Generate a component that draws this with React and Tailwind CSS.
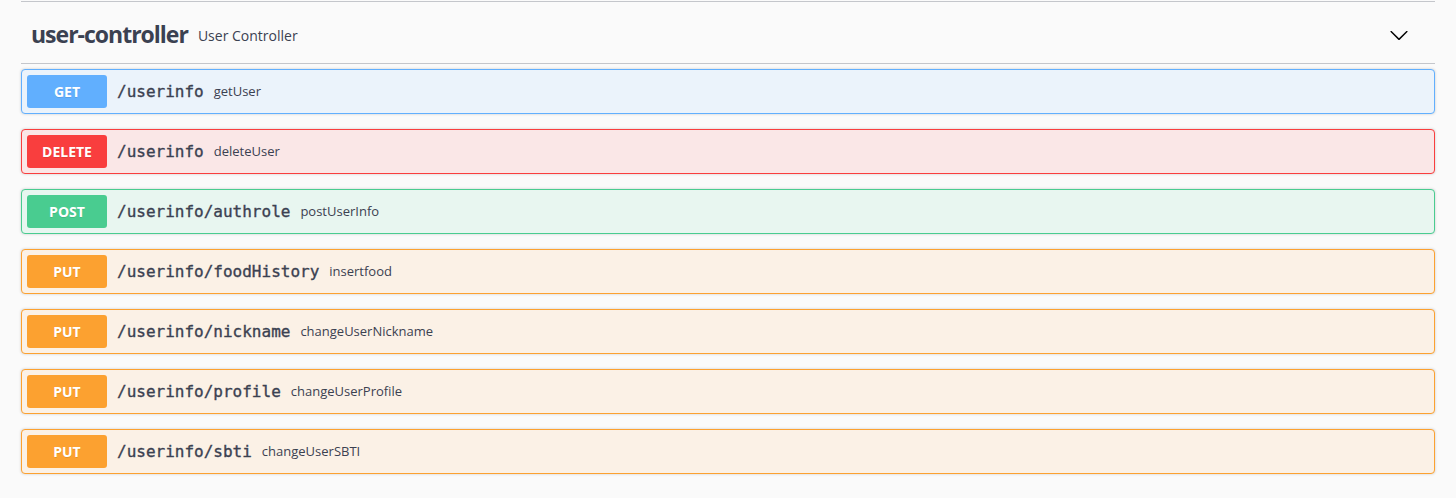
import * as React from "react";
import classNames from "clsx";

const ops = [
  { method: "GET", path: "/userinfo", summary: "getUser" },
  { method: "DELETE", path: "/userinfo", summary: "deleteUser" },
  { method: "POST", path: "/userinfo/authrole", summary: "postUserInfo" },
  { method: "PUT", path: "/userinfo/foodHistory", summary: "insertfood" },
  { method: "PUT", path: "/userinfo/nickname", summary: "changeUserNickname" },
  { method: "PUT", path: "/userinfo/profile", summary: "changeUserProfile" },
  { method: "PUT", path: "/userinfo/sbti", summary: "changeUserSBTI" }
];

const methodStyles = {
  GET: { block: "border-[#61affe] bg-[#ebf3fb]", badge: "bg-[#61affe]" },
  DELETE: { block: "border-[#f93e3e] bg-[#fae7e7]", badge: "bg-[#f93e3e]" },
  POST: { block: "border-[#49cc90] bg-[#e8f6f0]", badge: "bg-[#49cc90]" },
  PUT: { block: "border-[#fca130] bg-[#fbf1e6]", badge: "bg-[#fca130]" }
};

const sans = "font-['Open_Sans',sans-serif]";

function ArrowDown() {
  return (
    <svg width="20" height="20" viewBox="0 0 20 20" className="text-black">
      <path
        fill="currentColor"
        d="M17.418 6.109c.272-.268.709-.268.979 0s.271.701 0 .969l-7.908 7.83c-.27.268-.707.268-.979 0l-7.908-7.83c-.27-.268-.27-.701 0-.969.271-.268.709-.268.979 0L10 13.25l7.418-7.141z"
      />
    </svg>
  );
}

function OpBlock({ method, path, summary }) {
  const s = methodStyles[method];
  return (
    <div
      className={classNames(
        "mb-[15px] flex items-center rounded border p-[5px] shadow-[0_0_3px_rgba(0,0,0,0.19)]",
        s.block
      )}
    >
      <span
        className={classNames(
          "flex h-[33px] w-20 items-center justify-center rounded-[3px] text-sm font-bold text-white [text-shadow:0_1px_0_rgba(0,0,0,0.1)]",
          sans,
          s.badge
        )}
      >
        {method}
      </span>
      <span className="px-[10px] font-['DejaVu_Sans_Mono',monospace] text-base text-[#3b4151] [-webkit-text-stroke:0.35px_#3b4151]">
        {path}
      </span>
      <span className={classNames("pt-px text-[13px] text-[#3b4151]", sans)}>
        {summary}
      </span>
    </div>
  );
}

export default function App() {
  return (
    <div className="min-h-[498px] w-full bg-[#fafafa] px-[21px] pt-[1px]">
      <div
        className={classNames(
          "mb-[5px] flex h-[63px] items-center border-y border-[#c4c6cb] pl-[10px] pr-[26px] pt-[4px] text-[#3b4151]",
          sans
        )}
      >
        <span className="text-[23px] font-bold tracking-[-1px]">
          user-controller
        </span>
        <span className="px-[10px] pt-[3px] text-sm">User Controller</span>
        <div className="flex-1" />
        <ArrowDown />
      </div>
      {ops.map((op, i) => (
        <OpBlock key={i} {...op} />
      ))}
    </div>
  );
}
